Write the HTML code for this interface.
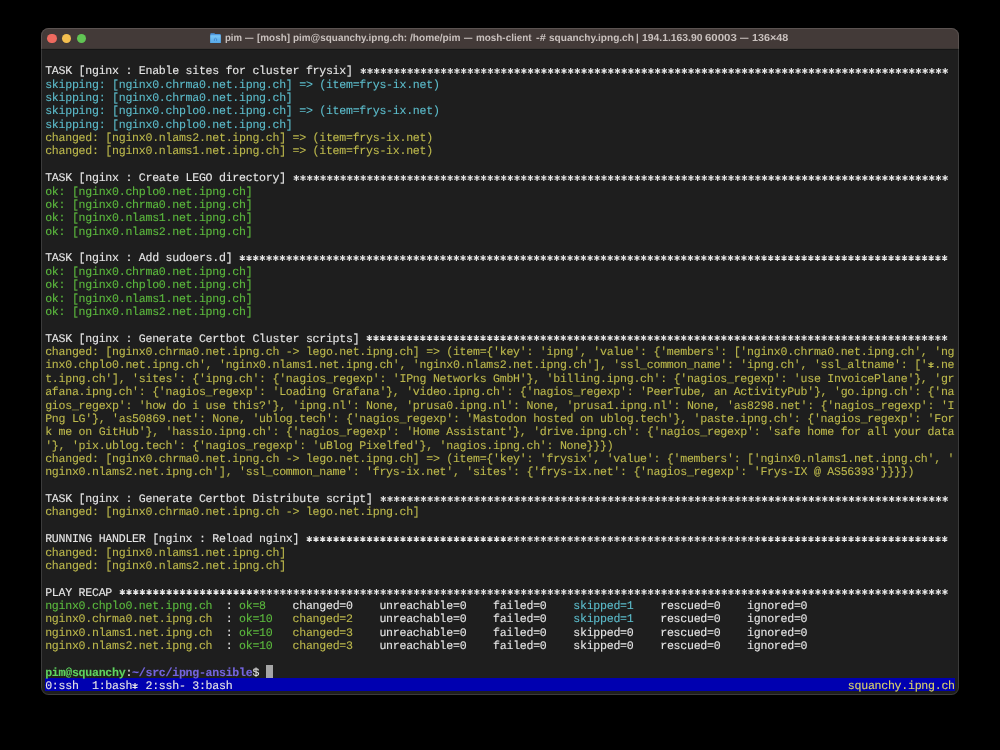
<!DOCTYPE html>
<html><head><meta charset="utf-8">
<style>
html,body{margin:0;padding:0;background:#000;width:1000px;height:750px;overflow:hidden;position:relative}
.win{position:absolute;left:41px;top:28px;width:917.8px;height:667px;border-radius:7.5px;background:#1e1e1e;overflow:hidden}
.bd{position:absolute;left:41px;top:28px;width:917.8px;height:667px;border-radius:7.5px;box-sizing:border-box;border:1px solid rgba(255,255,255,0.13)}
.tb{position:absolute;left:0;top:0;width:918px;height:20px;background:#433a38;border-bottom:1px solid #3b3633;box-shadow:0 1px 0 #161616}
.tl{position:absolute;top:6px;width:9.2px;height:9.2px;border-radius:50%}
.title span{position:absolute;top:0;transform-origin:0 0}
.title{position:absolute;left:0;top:3px;font-family:"Liberation Sans",sans-serif;font-weight:bold;font-size:10.2px;color:#c9c1be;white-space:pre;line-height:16px;will-change:transform;text-rendering:geometricPrecision}
.r,.sbt{position:absolute;left:45.2px;height:13.386px;line-height:13.386px;font-family:"Liberation Mono",monospace;font-size:11.6px;letter-spacing:-0.273px;white-space:pre;color:#e6e6e6;-webkit-text-stroke:0.1px currentColor;text-rendering:geometricPrecision}
.txt{position:absolute;left:0;top:0;width:1000px;height:750px;will-change:transform}
.st{position:absolute;overflow:visible}
.as{position:relative;top:3px}
.st path{stroke:#e6e6e6;stroke-width:1.25;stroke-linecap:butt;fill:none}
.w{color:#e6e6e6}.c{color:#5cbccb}.y{color:#bcb84c}.g{color:#5cba3e}
.pg{color:#5fd35f;font-weight:bold}.pp{color:#7465e0;font-weight:bold}
.cur{position:absolute;left:265.9px;top:664.5px;width:7.1px;height:13.37px;background:#a6a6a6}
.sb{position:absolute;left:45.2px;top:677.9px;width:909.6px;height:13.37px;background:#0000b0}
.sbt{width:909.6px}
.sbt .rt{position:absolute;right:0;top:0;color:#dcd46a}
</style></head><body>
<div class="win">
<div class="tb">
<div class="tl" style="left:6.4px;background:#ee6a5f"></div>
<div class="tl" style="left:21.1px;background:#f5bf4f"></div>
<div class="tl" style="left:35.9px;background:#61c554"></div>
<svg style="position:absolute;left:169px;top:4.8px" width="11" height="10.4" viewBox="0 0 11 10.4"><defs><linearGradient id="fg" x1="0" y1="0" x2="0" y2="1"><stop offset="0" stop-color="#7cc8f8"/><stop offset="1" stop-color="#55a8e8"/></linearGradient></defs><path d="M0.3 1.0 Q0.3 0.2 1.1 0.2 L3.9 0.2 Q4.4 0.2 4.7 0.6 L5.1 1.1 L10 1.1 Q10.7 1.1 10.7 1.8 L10.7 9.5 Q10.7 10.2 10 10.2 L1 10.2 Q0.3 10.2 0.3 9.5 Z" fill="#4d97de"/><path d="M0.3 2.3 L10.7 2.3 L10.7 9.5 Q10.7 10.2 10 10.2 L1 10.2 Q0.3 10.2 0.3 9.5 Z" fill="url(#fg)"/><path d="M4.4 8.0 L4.4 5.9 Q5.5 4.6 6.6 5.9 L6.6 8.0" stroke="#4a8ed2" stroke-width="1" fill="none"/></svg>
<div class="title"><span style="left:183.8px;transform:scaleX(0.939)">pim</span><span style="left:203.7px;transform:scaleX(0.830)">—</span><span style="left:215.7px;transform:scaleX(0.971)">[mosh]</span><span style="left:252.0px;transform:scaleX(0.973)">pim@squanchy.ipng.ch:</span><span style="left:368.8px;transform:scaleX(0.992)">/home/pim</span><span style="left:423.2px;transform:scaleX(0.820)">—</span><span style="left:435.2px;transform:scaleX(0.970)">mosh-client</span><span style="left:495.0px;transform:scaleX(1.078)">-#</span><span style="left:507.7px;transform:scaleX(0.988)">squanchy.ipng.ch</span><span style="left:595.4px;transform:scaleX(0.950)">|</span><span style="left:600.5px;transform:scaleX(1.017)">194.1.163.90</span><span style="left:664.2px;transform:scaleX(1.125)">60003</span><span style="left:699.4px;transform:scaleX(0.830)">—</span><span style="left:710.7px;transform:scaleX(1.059)">136×48</span></div>
</div>
</div>
<div class="bd"></div>
<div class="cur"></div>
<div class="sb"></div>
<div class="txt"><div class="r" style="top:65.27px"><span class="w">TASK [nginx : Enable sites for cluster frysix]</span></div>
<div class="r" style="top:78.64px"><span class="c">skipping: [nginx0.chrma0.net.ipng.ch] =&gt; (item=frys-ix.net)</span></div>
<div class="r" style="top:92.01px"><span class="c">skipping: [nginx0.chrma0.net.ipng.ch]</span></div>
<div class="r" style="top:105.38px"><span class="c">skipping: [nginx0.chplo0.net.ipng.ch] =&gt; (item=frys-ix.net)</span></div>
<div class="r" style="top:118.75px"><span class="c">skipping: [nginx0.chplo0.net.ipng.ch]</span></div>
<div class="r" style="top:132.12px"><span class="y">changed: [nginx0.nlams2.net.ipng.ch] =&gt; (item=frys-ix.net)</span></div>
<div class="r" style="top:145.49px"><span class="y">changed: [nginx0.nlams1.net.ipng.ch] =&gt; (item=frys-ix.net)</span></div>
<div class="r" style="top:172.23px"><span class="w">TASK [nginx : Create LEGO directory]</span></div>
<div class="r" style="top:185.60px"><span class="g">ok: [nginx0.chplo0.net.ipng.ch]</span></div>
<div class="r" style="top:198.97px"><span class="g">ok: [nginx0.chrma0.net.ipng.ch]</span></div>
<div class="r" style="top:212.34px"><span class="g">ok: [nginx0.nlams1.net.ipng.ch]</span></div>
<div class="r" style="top:225.71px"><span class="g">ok: [nginx0.nlams2.net.ipng.ch]</span></div>
<div class="r" style="top:252.45px"><span class="w">TASK [nginx : Add sudoers.d]</span></div>
<div class="r" style="top:265.82px"><span class="g">ok: [nginx0.chrma0.net.ipng.ch]</span></div>
<div class="r" style="top:279.19px"><span class="g">ok: [nginx0.chplo0.net.ipng.ch]</span></div>
<div class="r" style="top:292.56px"><span class="g">ok: [nginx0.nlams1.net.ipng.ch]</span></div>
<div class="r" style="top:305.93px"><span class="g">ok: [nginx0.nlams2.net.ipng.ch]</span></div>
<div class="r" style="top:332.67px"><span class="w">TASK [nginx : Generate Certbot Cluster scripts]</span></div>
<div class="r" style="top:346.04px"><span class="y">changed: [nginx0.chrma0.net.ipng.ch -&gt; lego.net.ipng.ch] =&gt; (item={'key': 'ipng', 'value': {'members': ['nginx0.chrma0.net.ipng.ch', 'ng</span></div>
<div class="r" style="top:359.41px"><span class="y">inx0.chplo0.net.ipng.ch', 'nginx0.nlams1.net.ipng.ch', 'nginx0.nlams2.net.ipng.ch'], 'ssl_common_name': 'ipng.ch', 'ssl_altname': [' .ne</span></div>
<div class="r" style="top:372.78px"><span class="y">t.ipng.ch'], 'sites': {'ipng.ch': {'nagios_regexp': 'IPng Networks GmbH'}, 'billing.ipng.ch': {'nagios_regexp': 'use InvoicePlane'}, 'gr</span></div>
<div class="r" style="top:386.15px"><span class="y">afana.ipng.ch': {'nagios_regexp': 'Loading Grafana'}, 'video.ipng.ch': {'nagios_regexp': 'PeerTube, an ActivityPub'}, 'go.ipng.ch': {'na</span></div>
<div class="r" style="top:399.52px"><span class="y">gios_regexp': 'how do i use this?'}, 'ipng.nl': None, 'prusa0.ipng.nl': None, 'prusa1.ipng.nl': None, 'as8298.net': {'nagios_regexp': 'I</span></div>
<div class="r" style="top:412.89px"><span class="y">Png LG'}, 'as50869.net': None, 'ublog.tech': {'nagios_regexp': 'Mastodon hosted on ublog.tech'}, 'paste.ipng.ch': {'nagios_regexp': 'For</span></div>
<div class="r" style="top:426.26px"><span class="y">k me on GitHub'}, 'hassio.ipng.ch': {'nagios_regexp': 'Home Assistant'}, 'drive.ipng.ch': {'nagios_regexp': 'safe home for all your data</span></div>
<div class="r" style="top:439.63px"><span class="y">'}, 'pix.ublog.tech': {'nagios_regexp': 'uBlog Pixelfed'}, 'nagios.ipng.ch': None}}})</span></div>
<div class="r" style="top:453.00px"><span class="y">changed: [nginx0.chrma0.net.ipng.ch -&gt; lego.net.ipng.ch] =&gt; (item={'key': 'frysix', 'value': {'members': ['nginx0.nlams1.net.ipng.ch', '</span></div>
<div class="r" style="top:466.37px"><span class="y">nginx0.nlams2.net.ipng.ch'], 'ssl_common_name': 'frys-ix.net', 'sites': {'frys-ix.net': {'nagios_regexp': 'Frys-IX @ AS56393'}}}})</span></div>
<div class="r" style="top:493.11px"><span class="w">TASK [nginx : Generate Certbot Distribute script]</span></div>
<div class="r" style="top:506.48px"><span class="y">changed: [nginx0.chrma0.net.ipng.ch -&gt; lego.net.ipng.ch]</span></div>
<div class="r" style="top:533.22px"><span class="w">RUNNING HANDLER [nginx : Reload nginx]</span></div>
<div class="r" style="top:546.59px"><span class="y">changed: [nginx0.nlams1.net.ipng.ch]</span></div>
<div class="r" style="top:559.96px"><span class="y">changed: [nginx0.nlams2.net.ipng.ch]</span></div>
<div class="r" style="top:586.70px"><span class="w">PLAY RECAP</span></div>
<div class="r" style="top:600.07px"><span class="g">nginx0.chplo0.net.ipng.ch </span><span class="w"> : </span><span class="g">ok=8   </span><span class="w"> </span><span class="w">changed=0   </span><span class="w"> </span><span class="w">unreachable=0   </span><span class="w"> </span><span class="w">failed=0   </span><span class="w"> </span><span class="c">skipped=1   </span><span class="w"> </span><span class="w">rescued=0   </span><span class="w"> </span><span class="w">ignored=0   </span></div>
<div class="r" style="top:613.44px"><span class="y">nginx0.chrma0.net.ipng.ch </span><span class="w"> : </span><span class="g">ok=10  </span><span class="w"> </span><span class="y">changed=2   </span><span class="w"> </span><span class="w">unreachable=0   </span><span class="w"> </span><span class="w">failed=0   </span><span class="w"> </span><span class="c">skipped=1   </span><span class="w"> </span><span class="w">rescued=0   </span><span class="w"> </span><span class="w">ignored=0   </span></div>
<div class="r" style="top:626.81px"><span class="y">nginx0.nlams1.net.ipng.ch </span><span class="w"> : </span><span class="g">ok=10  </span><span class="w"> </span><span class="y">changed=3   </span><span class="w"> </span><span class="w">unreachable=0   </span><span class="w"> </span><span class="w">failed=0   </span><span class="w"> </span><span class="w">skipped=0   </span><span class="w"> </span><span class="w">rescued=0   </span><span class="w"> </span><span class="w">ignored=0   </span></div>
<div class="r" style="top:640.18px"><span class="y">nginx0.nlams2.net.ipng.ch </span><span class="w"> : </span><span class="g">ok=10  </span><span class="w"> </span><span class="y">changed=3   </span><span class="w"> </span><span class="w">unreachable=0   </span><span class="w"> </span><span class="w">failed=0   </span><span class="w"> </span><span class="w">skipped=0   </span><span class="w"> </span><span class="w">rescued=0   </span><span class="w"> </span><span class="w">ignored=0   </span></div>
<div class="r" style="top:666.92px"><span class="pg">pim@squanchy</span><span class="w">:</span><span class="pp">~/src/ipng-ansible</span><span class="w">$ </span></div>
<svg class="st" style="left:359.54px;top:65.67px" width="588.54" height="10"><path d="M3.34 2.00v6.00M0.75 3.50l5.20 3.00m0 -3.00l-5.20 3.00M10.03 2.00v6.00M7.43 3.50l5.20 3.00m0 -3.00l-5.20 3.00M16.72 2.00v6.00M14.12 3.50l5.20 3.00m0 -3.00l-5.20 3.00M23.41 2.00v6.00M20.81 3.50l5.20 3.00m0 -3.00l-5.20 3.00M30.10 2.00v6.00M27.50 3.50l5.20 3.00m0 -3.00l-5.20 3.00M36.78 2.00v6.00M34.19 3.50l5.20 3.00m0 -3.00l-5.20 3.00M43.47 2.00v6.00M40.87 3.50l5.20 3.00m0 -3.00l-5.20 3.00M50.16 2.00v6.00M47.56 3.50l5.20 3.00m0 -3.00l-5.20 3.00M56.85 2.00v6.00M54.25 3.50l5.20 3.00m0 -3.00l-5.20 3.00M63.54 2.00v6.00M60.94 3.50l5.20 3.00m0 -3.00l-5.20 3.00M70.22 2.00v6.00M67.63 3.50l5.20 3.00m0 -3.00l-5.20 3.00M76.91 2.00v6.00M74.31 3.50l5.20 3.00m0 -3.00l-5.20 3.00M83.60 2.00v6.00M81.00 3.50l5.20 3.00m0 -3.00l-5.20 3.00M90.29 2.00v6.00M87.69 3.50l5.20 3.00m0 -3.00l-5.20 3.00M96.98 2.00v6.00M94.38 3.50l5.20 3.00m0 -3.00l-5.20 3.00M103.66 2.00v6.00M101.07 3.50l5.20 3.00m0 -3.00l-5.20 3.00M110.35 2.00v6.00M107.75 3.50l5.20 3.00m0 -3.00l-5.20 3.00M117.04 2.00v6.00M114.44 3.50l5.20 3.00m0 -3.00l-5.20 3.00M123.73 2.00v6.00M121.13 3.50l5.20 3.00m0 -3.00l-5.20 3.00M130.42 2.00v6.00M127.82 3.50l5.20 3.00m0 -3.00l-5.20 3.00M137.10 2.00v6.00M134.51 3.50l5.20 3.00m0 -3.00l-5.20 3.00M143.79 2.00v6.00M141.19 3.50l5.20 3.00m0 -3.00l-5.20 3.00M150.48 2.00v6.00M147.88 3.50l5.20 3.00m0 -3.00l-5.20 3.00M157.17 2.00v6.00M154.57 3.50l5.20 3.00m0 -3.00l-5.20 3.00M163.86 2.00v6.00M161.26 3.50l5.20 3.00m0 -3.00l-5.20 3.00M170.54 2.00v6.00M167.95 3.50l5.20 3.00m0 -3.00l-5.20 3.00M177.23 2.00v6.00M174.63 3.50l5.20 3.00m0 -3.00l-5.20 3.00M183.92 2.00v6.00M181.32 3.50l5.20 3.00m0 -3.00l-5.20 3.00M190.61 2.00v6.00M188.01 3.50l5.20 3.00m0 -3.00l-5.20 3.00M197.30 2.00v6.00M194.70 3.50l5.20 3.00m0 -3.00l-5.20 3.00M203.98 2.00v6.00M201.39 3.50l5.20 3.00m0 -3.00l-5.20 3.00M210.67 2.00v6.00M208.07 3.50l5.20 3.00m0 -3.00l-5.20 3.00M217.36 2.00v6.00M214.76 3.50l5.20 3.00m0 -3.00l-5.20 3.00M224.05 2.00v6.00M221.45 3.50l5.20 3.00m0 -3.00l-5.20 3.00M230.74 2.00v6.00M228.14 3.50l5.20 3.00m0 -3.00l-5.20 3.00M237.42 2.00v6.00M234.83 3.50l5.20 3.00m0 -3.00l-5.20 3.00M244.11 2.00v6.00M241.51 3.50l5.20 3.00m0 -3.00l-5.20 3.00M250.80 2.00v6.00M248.20 3.50l5.20 3.00m0 -3.00l-5.20 3.00M257.49 2.00v6.00M254.89 3.50l5.20 3.00m0 -3.00l-5.20 3.00M264.18 2.00v6.00M261.58 3.50l5.20 3.00m0 -3.00l-5.20 3.00M270.86 2.00v6.00M268.27 3.50l5.20 3.00m0 -3.00l-5.20 3.00M277.55 2.00v6.00M274.95 3.50l5.20 3.00m0 -3.00l-5.20 3.00M284.24 2.00v6.00M281.64 3.50l5.20 3.00m0 -3.00l-5.20 3.00M290.93 2.00v6.00M288.33 3.50l5.20 3.00m0 -3.00l-5.20 3.00M297.62 2.00v6.00M295.02 3.50l5.20 3.00m0 -3.00l-5.20 3.00M304.30 2.00v6.00M301.71 3.50l5.20 3.00m0 -3.00l-5.20 3.00M310.99 2.00v6.00M308.39 3.50l5.20 3.00m0 -3.00l-5.20 3.00M317.68 2.00v6.00M315.08 3.50l5.20 3.00m0 -3.00l-5.20 3.00M324.37 2.00v6.00M321.77 3.50l5.20 3.00m0 -3.00l-5.20 3.00M331.06 2.00v6.00M328.46 3.50l5.20 3.00m0 -3.00l-5.20 3.00M337.74 2.00v6.00M335.15 3.50l5.20 3.00m0 -3.00l-5.20 3.00M344.43 2.00v6.00M341.83 3.50l5.20 3.00m0 -3.00l-5.20 3.00M351.12 2.00v6.00M348.52 3.50l5.20 3.00m0 -3.00l-5.20 3.00M357.81 2.00v6.00M355.21 3.50l5.20 3.00m0 -3.00l-5.20 3.00M364.50 2.00v6.00M361.90 3.50l5.20 3.00m0 -3.00l-5.20 3.00M371.18 2.00v6.00M368.59 3.50l5.20 3.00m0 -3.00l-5.20 3.00M377.87 2.00v6.00M375.27 3.50l5.20 3.00m0 -3.00l-5.20 3.00M384.56 2.00v6.00M381.96 3.50l5.20 3.00m0 -3.00l-5.20 3.00M391.25 2.00v6.00M388.65 3.50l5.20 3.00m0 -3.00l-5.20 3.00M397.94 2.00v6.00M395.34 3.50l5.20 3.00m0 -3.00l-5.20 3.00M404.62 2.00v6.00M402.03 3.50l5.20 3.00m0 -3.00l-5.20 3.00M411.31 2.00v6.00M408.71 3.50l5.20 3.00m0 -3.00l-5.20 3.00M418.00 2.00v6.00M415.40 3.50l5.20 3.00m0 -3.00l-5.20 3.00M424.69 2.00v6.00M422.09 3.50l5.20 3.00m0 -3.00l-5.20 3.00M431.38 2.00v6.00M428.78 3.50l5.20 3.00m0 -3.00l-5.20 3.00M438.06 2.00v6.00M435.47 3.50l5.20 3.00m0 -3.00l-5.20 3.00M444.75 2.00v6.00M442.15 3.50l5.20 3.00m0 -3.00l-5.20 3.00M451.44 2.00v6.00M448.84 3.50l5.20 3.00m0 -3.00l-5.20 3.00M458.13 2.00v6.00M455.53 3.50l5.20 3.00m0 -3.00l-5.20 3.00M464.82 2.00v6.00M462.22 3.50l5.20 3.00m0 -3.00l-5.20 3.00M471.50 2.00v6.00M468.91 3.50l5.20 3.00m0 -3.00l-5.20 3.00M478.19 2.00v6.00M475.59 3.50l5.20 3.00m0 -3.00l-5.20 3.00M484.88 2.00v6.00M482.28 3.50l5.20 3.00m0 -3.00l-5.20 3.00M491.57 2.00v6.00M488.97 3.50l5.20 3.00m0 -3.00l-5.20 3.00M498.26 2.00v6.00M495.66 3.50l5.20 3.00m0 -3.00l-5.20 3.00M504.94 2.00v6.00M502.35 3.50l5.20 3.00m0 -3.00l-5.20 3.00M511.63 2.00v6.00M509.03 3.50l5.20 3.00m0 -3.00l-5.20 3.00M518.32 2.00v6.00M515.72 3.50l5.20 3.00m0 -3.00l-5.20 3.00M525.01 2.00v6.00M522.41 3.50l5.20 3.00m0 -3.00l-5.20 3.00M531.70 2.00v6.00M529.10 3.50l5.20 3.00m0 -3.00l-5.20 3.00M538.38 2.00v6.00M535.79 3.50l5.20 3.00m0 -3.00l-5.20 3.00M545.07 2.00v6.00M542.47 3.50l5.20 3.00m0 -3.00l-5.20 3.00M551.76 2.00v6.00M549.16 3.50l5.20 3.00m0 -3.00l-5.20 3.00M558.45 2.00v6.00M555.85 3.50l5.20 3.00m0 -3.00l-5.20 3.00M565.14 2.00v6.00M562.54 3.50l5.20 3.00m0 -3.00l-5.20 3.00M571.82 2.00v6.00M569.23 3.50l5.20 3.00m0 -3.00l-5.20 3.00M578.51 2.00v6.00M575.91 3.50l5.20 3.00m0 -3.00l-5.20 3.00M585.20 2.00v6.00M582.60 3.50l5.20 3.00m0 -3.00l-5.20 3.00"/></svg>
<svg class="st" style="left:292.66px;top:172.63px" width="655.42" height="10"><path d="M3.34 2.00v6.00M0.75 3.50l5.20 3.00m0 -3.00l-5.20 3.00M10.03 2.00v6.00M7.43 3.50l5.20 3.00m0 -3.00l-5.20 3.00M16.72 2.00v6.00M14.12 3.50l5.20 3.00m0 -3.00l-5.20 3.00M23.41 2.00v6.00M20.81 3.50l5.20 3.00m0 -3.00l-5.20 3.00M30.10 2.00v6.00M27.50 3.50l5.20 3.00m0 -3.00l-5.20 3.00M36.78 2.00v6.00M34.19 3.50l5.20 3.00m0 -3.00l-5.20 3.00M43.47 2.00v6.00M40.87 3.50l5.20 3.00m0 -3.00l-5.20 3.00M50.16 2.00v6.00M47.56 3.50l5.20 3.00m0 -3.00l-5.20 3.00M56.85 2.00v6.00M54.25 3.50l5.20 3.00m0 -3.00l-5.20 3.00M63.54 2.00v6.00M60.94 3.50l5.20 3.00m0 -3.00l-5.20 3.00M70.22 2.00v6.00M67.63 3.50l5.20 3.00m0 -3.00l-5.20 3.00M76.91 2.00v6.00M74.31 3.50l5.20 3.00m0 -3.00l-5.20 3.00M83.60 2.00v6.00M81.00 3.50l5.20 3.00m0 -3.00l-5.20 3.00M90.29 2.00v6.00M87.69 3.50l5.20 3.00m0 -3.00l-5.20 3.00M96.98 2.00v6.00M94.38 3.50l5.20 3.00m0 -3.00l-5.20 3.00M103.66 2.00v6.00M101.07 3.50l5.20 3.00m0 -3.00l-5.20 3.00M110.35 2.00v6.00M107.75 3.50l5.20 3.00m0 -3.00l-5.20 3.00M117.04 2.00v6.00M114.44 3.50l5.20 3.00m0 -3.00l-5.20 3.00M123.73 2.00v6.00M121.13 3.50l5.20 3.00m0 -3.00l-5.20 3.00M130.42 2.00v6.00M127.82 3.50l5.20 3.00m0 -3.00l-5.20 3.00M137.10 2.00v6.00M134.51 3.50l5.20 3.00m0 -3.00l-5.20 3.00M143.79 2.00v6.00M141.19 3.50l5.20 3.00m0 -3.00l-5.20 3.00M150.48 2.00v6.00M147.88 3.50l5.20 3.00m0 -3.00l-5.20 3.00M157.17 2.00v6.00M154.57 3.50l5.20 3.00m0 -3.00l-5.20 3.00M163.86 2.00v6.00M161.26 3.50l5.20 3.00m0 -3.00l-5.20 3.00M170.54 2.00v6.00M167.95 3.50l5.20 3.00m0 -3.00l-5.20 3.00M177.23 2.00v6.00M174.63 3.50l5.20 3.00m0 -3.00l-5.20 3.00M183.92 2.00v6.00M181.32 3.50l5.20 3.00m0 -3.00l-5.20 3.00M190.61 2.00v6.00M188.01 3.50l5.20 3.00m0 -3.00l-5.20 3.00M197.30 2.00v6.00M194.70 3.50l5.20 3.00m0 -3.00l-5.20 3.00M203.98 2.00v6.00M201.39 3.50l5.20 3.00m0 -3.00l-5.20 3.00M210.67 2.00v6.00M208.07 3.50l5.20 3.00m0 -3.00l-5.20 3.00M217.36 2.00v6.00M214.76 3.50l5.20 3.00m0 -3.00l-5.20 3.00M224.05 2.00v6.00M221.45 3.50l5.20 3.00m0 -3.00l-5.20 3.00M230.74 2.00v6.00M228.14 3.50l5.20 3.00m0 -3.00l-5.20 3.00M237.42 2.00v6.00M234.83 3.50l5.20 3.00m0 -3.00l-5.20 3.00M244.11 2.00v6.00M241.51 3.50l5.20 3.00m0 -3.00l-5.20 3.00M250.80 2.00v6.00M248.20 3.50l5.20 3.00m0 -3.00l-5.20 3.00M257.49 2.00v6.00M254.89 3.50l5.20 3.00m0 -3.00l-5.20 3.00M264.18 2.00v6.00M261.58 3.50l5.20 3.00m0 -3.00l-5.20 3.00M270.86 2.00v6.00M268.27 3.50l5.20 3.00m0 -3.00l-5.20 3.00M277.55 2.00v6.00M274.95 3.50l5.20 3.00m0 -3.00l-5.20 3.00M284.24 2.00v6.00M281.64 3.50l5.20 3.00m0 -3.00l-5.20 3.00M290.93 2.00v6.00M288.33 3.50l5.20 3.00m0 -3.00l-5.20 3.00M297.62 2.00v6.00M295.02 3.50l5.20 3.00m0 -3.00l-5.20 3.00M304.30 2.00v6.00M301.71 3.50l5.20 3.00m0 -3.00l-5.20 3.00M310.99 2.00v6.00M308.39 3.50l5.20 3.00m0 -3.00l-5.20 3.00M317.68 2.00v6.00M315.08 3.50l5.20 3.00m0 -3.00l-5.20 3.00M324.37 2.00v6.00M321.77 3.50l5.20 3.00m0 -3.00l-5.20 3.00M331.06 2.00v6.00M328.46 3.50l5.20 3.00m0 -3.00l-5.20 3.00M337.74 2.00v6.00M335.15 3.50l5.20 3.00m0 -3.00l-5.20 3.00M344.43 2.00v6.00M341.83 3.50l5.20 3.00m0 -3.00l-5.20 3.00M351.12 2.00v6.00M348.52 3.50l5.20 3.00m0 -3.00l-5.20 3.00M357.81 2.00v6.00M355.21 3.50l5.20 3.00m0 -3.00l-5.20 3.00M364.50 2.00v6.00M361.90 3.50l5.20 3.00m0 -3.00l-5.20 3.00M371.18 2.00v6.00M368.59 3.50l5.20 3.00m0 -3.00l-5.20 3.00M377.87 2.00v6.00M375.27 3.50l5.20 3.00m0 -3.00l-5.20 3.00M384.56 2.00v6.00M381.96 3.50l5.20 3.00m0 -3.00l-5.20 3.00M391.25 2.00v6.00M388.65 3.50l5.20 3.00m0 -3.00l-5.20 3.00M397.94 2.00v6.00M395.34 3.50l5.20 3.00m0 -3.00l-5.20 3.00M404.62 2.00v6.00M402.03 3.50l5.20 3.00m0 -3.00l-5.20 3.00M411.31 2.00v6.00M408.71 3.50l5.20 3.00m0 -3.00l-5.20 3.00M418.00 2.00v6.00M415.40 3.50l5.20 3.00m0 -3.00l-5.20 3.00M424.69 2.00v6.00M422.09 3.50l5.20 3.00m0 -3.00l-5.20 3.00M431.38 2.00v6.00M428.78 3.50l5.20 3.00m0 -3.00l-5.20 3.00M438.06 2.00v6.00M435.47 3.50l5.20 3.00m0 -3.00l-5.20 3.00M444.75 2.00v6.00M442.15 3.50l5.20 3.00m0 -3.00l-5.20 3.00M451.44 2.00v6.00M448.84 3.50l5.20 3.00m0 -3.00l-5.20 3.00M458.13 2.00v6.00M455.53 3.50l5.20 3.00m0 -3.00l-5.20 3.00M464.82 2.00v6.00M462.22 3.50l5.20 3.00m0 -3.00l-5.20 3.00M471.50 2.00v6.00M468.91 3.50l5.20 3.00m0 -3.00l-5.20 3.00M478.19 2.00v6.00M475.59 3.50l5.20 3.00m0 -3.00l-5.20 3.00M484.88 2.00v6.00M482.28 3.50l5.20 3.00m0 -3.00l-5.20 3.00M491.57 2.00v6.00M488.97 3.50l5.20 3.00m0 -3.00l-5.20 3.00M498.26 2.00v6.00M495.66 3.50l5.20 3.00m0 -3.00l-5.20 3.00M504.94 2.00v6.00M502.35 3.50l5.20 3.00m0 -3.00l-5.20 3.00M511.63 2.00v6.00M509.03 3.50l5.20 3.00m0 -3.00l-5.20 3.00M518.32 2.00v6.00M515.72 3.50l5.20 3.00m0 -3.00l-5.20 3.00M525.01 2.00v6.00M522.41 3.50l5.20 3.00m0 -3.00l-5.20 3.00M531.70 2.00v6.00M529.10 3.50l5.20 3.00m0 -3.00l-5.20 3.00M538.38 2.00v6.00M535.79 3.50l5.20 3.00m0 -3.00l-5.20 3.00M545.07 2.00v6.00M542.47 3.50l5.20 3.00m0 -3.00l-5.20 3.00M551.76 2.00v6.00M549.16 3.50l5.20 3.00m0 -3.00l-5.20 3.00M558.45 2.00v6.00M555.85 3.50l5.20 3.00m0 -3.00l-5.20 3.00M565.14 2.00v6.00M562.54 3.50l5.20 3.00m0 -3.00l-5.20 3.00M571.82 2.00v6.00M569.23 3.50l5.20 3.00m0 -3.00l-5.20 3.00M578.51 2.00v6.00M575.91 3.50l5.20 3.00m0 -3.00l-5.20 3.00M585.20 2.00v6.00M582.60 3.50l5.20 3.00m0 -3.00l-5.20 3.00M591.89 2.00v6.00M589.29 3.50l5.20 3.00m0 -3.00l-5.20 3.00M598.58 2.00v6.00M595.98 3.50l5.20 3.00m0 -3.00l-5.20 3.00M605.26 2.00v6.00M602.67 3.50l5.20 3.00m0 -3.00l-5.20 3.00M611.95 2.00v6.00M609.35 3.50l5.20 3.00m0 -3.00l-5.20 3.00M618.64 2.00v6.00M616.04 3.50l5.20 3.00m0 -3.00l-5.20 3.00M625.33 2.00v6.00M622.73 3.50l5.20 3.00m0 -3.00l-5.20 3.00M632.02 2.00v6.00M629.42 3.50l5.20 3.00m0 -3.00l-5.20 3.00M638.70 2.00v6.00M636.11 3.50l5.20 3.00m0 -3.00l-5.20 3.00M645.39 2.00v6.00M642.79 3.50l5.20 3.00m0 -3.00l-5.20 3.00M652.08 2.00v6.00M649.48 3.50l5.20 3.00m0 -3.00l-5.20 3.00"/></svg>
<svg class="st" style="left:239.15px;top:252.85px" width="708.93" height="10"><path d="M3.34 2.00v6.00M0.75 3.50l5.20 3.00m0 -3.00l-5.20 3.00M10.03 2.00v6.00M7.43 3.50l5.20 3.00m0 -3.00l-5.20 3.00M16.72 2.00v6.00M14.12 3.50l5.20 3.00m0 -3.00l-5.20 3.00M23.41 2.00v6.00M20.81 3.50l5.20 3.00m0 -3.00l-5.20 3.00M30.10 2.00v6.00M27.50 3.50l5.20 3.00m0 -3.00l-5.20 3.00M36.78 2.00v6.00M34.19 3.50l5.20 3.00m0 -3.00l-5.20 3.00M43.47 2.00v6.00M40.87 3.50l5.20 3.00m0 -3.00l-5.20 3.00M50.16 2.00v6.00M47.56 3.50l5.20 3.00m0 -3.00l-5.20 3.00M56.85 2.00v6.00M54.25 3.50l5.20 3.00m0 -3.00l-5.20 3.00M63.54 2.00v6.00M60.94 3.50l5.20 3.00m0 -3.00l-5.20 3.00M70.22 2.00v6.00M67.63 3.50l5.20 3.00m0 -3.00l-5.20 3.00M76.91 2.00v6.00M74.31 3.50l5.20 3.00m0 -3.00l-5.20 3.00M83.60 2.00v6.00M81.00 3.50l5.20 3.00m0 -3.00l-5.20 3.00M90.29 2.00v6.00M87.69 3.50l5.20 3.00m0 -3.00l-5.20 3.00M96.98 2.00v6.00M94.38 3.50l5.20 3.00m0 -3.00l-5.20 3.00M103.66 2.00v6.00M101.07 3.50l5.20 3.00m0 -3.00l-5.20 3.00M110.35 2.00v6.00M107.75 3.50l5.20 3.00m0 -3.00l-5.20 3.00M117.04 2.00v6.00M114.44 3.50l5.20 3.00m0 -3.00l-5.20 3.00M123.73 2.00v6.00M121.13 3.50l5.20 3.00m0 -3.00l-5.20 3.00M130.42 2.00v6.00M127.82 3.50l5.20 3.00m0 -3.00l-5.20 3.00M137.10 2.00v6.00M134.51 3.50l5.20 3.00m0 -3.00l-5.20 3.00M143.79 2.00v6.00M141.19 3.50l5.20 3.00m0 -3.00l-5.20 3.00M150.48 2.00v6.00M147.88 3.50l5.20 3.00m0 -3.00l-5.20 3.00M157.17 2.00v6.00M154.57 3.50l5.20 3.00m0 -3.00l-5.20 3.00M163.86 2.00v6.00M161.26 3.50l5.20 3.00m0 -3.00l-5.20 3.00M170.54 2.00v6.00M167.95 3.50l5.20 3.00m0 -3.00l-5.20 3.00M177.23 2.00v6.00M174.63 3.50l5.20 3.00m0 -3.00l-5.20 3.00M183.92 2.00v6.00M181.32 3.50l5.20 3.00m0 -3.00l-5.20 3.00M190.61 2.00v6.00M188.01 3.50l5.20 3.00m0 -3.00l-5.20 3.00M197.30 2.00v6.00M194.70 3.50l5.20 3.00m0 -3.00l-5.20 3.00M203.98 2.00v6.00M201.39 3.50l5.20 3.00m0 -3.00l-5.20 3.00M210.67 2.00v6.00M208.07 3.50l5.20 3.00m0 -3.00l-5.20 3.00M217.36 2.00v6.00M214.76 3.50l5.20 3.00m0 -3.00l-5.20 3.00M224.05 2.00v6.00M221.45 3.50l5.20 3.00m0 -3.00l-5.20 3.00M230.74 2.00v6.00M228.14 3.50l5.20 3.00m0 -3.00l-5.20 3.00M237.42 2.00v6.00M234.83 3.50l5.20 3.00m0 -3.00l-5.20 3.00M244.11 2.00v6.00M241.51 3.50l5.20 3.00m0 -3.00l-5.20 3.00M250.80 2.00v6.00M248.20 3.50l5.20 3.00m0 -3.00l-5.20 3.00M257.49 2.00v6.00M254.89 3.50l5.20 3.00m0 -3.00l-5.20 3.00M264.18 2.00v6.00M261.58 3.50l5.20 3.00m0 -3.00l-5.20 3.00M270.86 2.00v6.00M268.27 3.50l5.20 3.00m0 -3.00l-5.20 3.00M277.55 2.00v6.00M274.95 3.50l5.20 3.00m0 -3.00l-5.20 3.00M284.24 2.00v6.00M281.64 3.50l5.20 3.00m0 -3.00l-5.20 3.00M290.93 2.00v6.00M288.33 3.50l5.20 3.00m0 -3.00l-5.20 3.00M297.62 2.00v6.00M295.02 3.50l5.20 3.00m0 -3.00l-5.20 3.00M304.30 2.00v6.00M301.71 3.50l5.20 3.00m0 -3.00l-5.20 3.00M310.99 2.00v6.00M308.39 3.50l5.20 3.00m0 -3.00l-5.20 3.00M317.68 2.00v6.00M315.08 3.50l5.20 3.00m0 -3.00l-5.20 3.00M324.37 2.00v6.00M321.77 3.50l5.20 3.00m0 -3.00l-5.20 3.00M331.06 2.00v6.00M328.46 3.50l5.20 3.00m0 -3.00l-5.20 3.00M337.74 2.00v6.00M335.15 3.50l5.20 3.00m0 -3.00l-5.20 3.00M344.43 2.00v6.00M341.83 3.50l5.20 3.00m0 -3.00l-5.20 3.00M351.12 2.00v6.00M348.52 3.50l5.20 3.00m0 -3.00l-5.20 3.00M357.81 2.00v6.00M355.21 3.50l5.20 3.00m0 -3.00l-5.20 3.00M364.50 2.00v6.00M361.90 3.50l5.20 3.00m0 -3.00l-5.20 3.00M371.18 2.00v6.00M368.59 3.50l5.20 3.00m0 -3.00l-5.20 3.00M377.87 2.00v6.00M375.27 3.50l5.20 3.00m0 -3.00l-5.20 3.00M384.56 2.00v6.00M381.96 3.50l5.20 3.00m0 -3.00l-5.20 3.00M391.25 2.00v6.00M388.65 3.50l5.20 3.00m0 -3.00l-5.20 3.00M397.94 2.00v6.00M395.34 3.50l5.20 3.00m0 -3.00l-5.20 3.00M404.62 2.00v6.00M402.03 3.50l5.20 3.00m0 -3.00l-5.20 3.00M411.31 2.00v6.00M408.71 3.50l5.20 3.00m0 -3.00l-5.20 3.00M418.00 2.00v6.00M415.40 3.50l5.20 3.00m0 -3.00l-5.20 3.00M424.69 2.00v6.00M422.09 3.50l5.20 3.00m0 -3.00l-5.20 3.00M431.38 2.00v6.00M428.78 3.50l5.20 3.00m0 -3.00l-5.20 3.00M438.06 2.00v6.00M435.47 3.50l5.20 3.00m0 -3.00l-5.20 3.00M444.75 2.00v6.00M442.15 3.50l5.20 3.00m0 -3.00l-5.20 3.00M451.44 2.00v6.00M448.84 3.50l5.20 3.00m0 -3.00l-5.20 3.00M458.13 2.00v6.00M455.53 3.50l5.20 3.00m0 -3.00l-5.20 3.00M464.82 2.00v6.00M462.22 3.50l5.20 3.00m0 -3.00l-5.20 3.00M471.50 2.00v6.00M468.91 3.50l5.20 3.00m0 -3.00l-5.20 3.00M478.19 2.00v6.00M475.59 3.50l5.20 3.00m0 -3.00l-5.20 3.00M484.88 2.00v6.00M482.28 3.50l5.20 3.00m0 -3.00l-5.20 3.00M491.57 2.00v6.00M488.97 3.50l5.20 3.00m0 -3.00l-5.20 3.00M498.26 2.00v6.00M495.66 3.50l5.20 3.00m0 -3.00l-5.20 3.00M504.94 2.00v6.00M502.35 3.50l5.20 3.00m0 -3.00l-5.20 3.00M511.63 2.00v6.00M509.03 3.50l5.20 3.00m0 -3.00l-5.20 3.00M518.32 2.00v6.00M515.72 3.50l5.20 3.00m0 -3.00l-5.20 3.00M525.01 2.00v6.00M522.41 3.50l5.20 3.00m0 -3.00l-5.20 3.00M531.70 2.00v6.00M529.10 3.50l5.20 3.00m0 -3.00l-5.20 3.00M538.38 2.00v6.00M535.79 3.50l5.20 3.00m0 -3.00l-5.20 3.00M545.07 2.00v6.00M542.47 3.50l5.20 3.00m0 -3.00l-5.20 3.00M551.76 2.00v6.00M549.16 3.50l5.20 3.00m0 -3.00l-5.20 3.00M558.45 2.00v6.00M555.85 3.50l5.20 3.00m0 -3.00l-5.20 3.00M565.14 2.00v6.00M562.54 3.50l5.20 3.00m0 -3.00l-5.20 3.00M571.82 2.00v6.00M569.23 3.50l5.20 3.00m0 -3.00l-5.20 3.00M578.51 2.00v6.00M575.91 3.50l5.20 3.00m0 -3.00l-5.20 3.00M585.20 2.00v6.00M582.60 3.50l5.20 3.00m0 -3.00l-5.20 3.00M591.89 2.00v6.00M589.29 3.50l5.20 3.00m0 -3.00l-5.20 3.00M598.58 2.00v6.00M595.98 3.50l5.20 3.00m0 -3.00l-5.20 3.00M605.26 2.00v6.00M602.67 3.50l5.20 3.00m0 -3.00l-5.20 3.00M611.95 2.00v6.00M609.35 3.50l5.20 3.00m0 -3.00l-5.20 3.00M618.64 2.00v6.00M616.04 3.50l5.20 3.00m0 -3.00l-5.20 3.00M625.33 2.00v6.00M622.73 3.50l5.20 3.00m0 -3.00l-5.20 3.00M632.02 2.00v6.00M629.42 3.50l5.20 3.00m0 -3.00l-5.20 3.00M638.70 2.00v6.00M636.11 3.50l5.20 3.00m0 -3.00l-5.20 3.00M645.39 2.00v6.00M642.79 3.50l5.20 3.00m0 -3.00l-5.20 3.00M652.08 2.00v6.00M649.48 3.50l5.20 3.00m0 -3.00l-5.20 3.00M658.77 2.00v6.00M656.17 3.50l5.20 3.00m0 -3.00l-5.20 3.00M665.46 2.00v6.00M662.86 3.50l5.20 3.00m0 -3.00l-5.20 3.00M672.14 2.00v6.00M669.55 3.50l5.20 3.00m0 -3.00l-5.20 3.00M678.83 2.00v6.00M676.23 3.50l5.20 3.00m0 -3.00l-5.20 3.00M685.52 2.00v6.00M682.92 3.50l5.20 3.00m0 -3.00l-5.20 3.00M692.21 2.00v6.00M689.61 3.50l5.20 3.00m0 -3.00l-5.20 3.00M698.90 2.00v6.00M696.30 3.50l5.20 3.00m0 -3.00l-5.20 3.00M705.58 2.00v6.00M702.99 3.50l5.20 3.00m0 -3.00l-5.20 3.00"/></svg>
<svg class="st" style="left:366.22px;top:333.07px" width="581.86" height="10"><path d="M3.34 2.00v6.00M0.75 3.50l5.20 3.00m0 -3.00l-5.20 3.00M10.03 2.00v6.00M7.43 3.50l5.20 3.00m0 -3.00l-5.20 3.00M16.72 2.00v6.00M14.12 3.50l5.20 3.00m0 -3.00l-5.20 3.00M23.41 2.00v6.00M20.81 3.50l5.20 3.00m0 -3.00l-5.20 3.00M30.10 2.00v6.00M27.50 3.50l5.20 3.00m0 -3.00l-5.20 3.00M36.78 2.00v6.00M34.19 3.50l5.20 3.00m0 -3.00l-5.20 3.00M43.47 2.00v6.00M40.87 3.50l5.20 3.00m0 -3.00l-5.20 3.00M50.16 2.00v6.00M47.56 3.50l5.20 3.00m0 -3.00l-5.20 3.00M56.85 2.00v6.00M54.25 3.50l5.20 3.00m0 -3.00l-5.20 3.00M63.54 2.00v6.00M60.94 3.50l5.20 3.00m0 -3.00l-5.20 3.00M70.22 2.00v6.00M67.63 3.50l5.20 3.00m0 -3.00l-5.20 3.00M76.91 2.00v6.00M74.31 3.50l5.20 3.00m0 -3.00l-5.20 3.00M83.60 2.00v6.00M81.00 3.50l5.20 3.00m0 -3.00l-5.20 3.00M90.29 2.00v6.00M87.69 3.50l5.20 3.00m0 -3.00l-5.20 3.00M96.98 2.00v6.00M94.38 3.50l5.20 3.00m0 -3.00l-5.20 3.00M103.66 2.00v6.00M101.07 3.50l5.20 3.00m0 -3.00l-5.20 3.00M110.35 2.00v6.00M107.75 3.50l5.20 3.00m0 -3.00l-5.20 3.00M117.04 2.00v6.00M114.44 3.50l5.20 3.00m0 -3.00l-5.20 3.00M123.73 2.00v6.00M121.13 3.50l5.20 3.00m0 -3.00l-5.20 3.00M130.42 2.00v6.00M127.82 3.50l5.20 3.00m0 -3.00l-5.20 3.00M137.10 2.00v6.00M134.51 3.50l5.20 3.00m0 -3.00l-5.20 3.00M143.79 2.00v6.00M141.19 3.50l5.20 3.00m0 -3.00l-5.20 3.00M150.48 2.00v6.00M147.88 3.50l5.20 3.00m0 -3.00l-5.20 3.00M157.17 2.00v6.00M154.57 3.50l5.20 3.00m0 -3.00l-5.20 3.00M163.86 2.00v6.00M161.26 3.50l5.20 3.00m0 -3.00l-5.20 3.00M170.54 2.00v6.00M167.95 3.50l5.20 3.00m0 -3.00l-5.20 3.00M177.23 2.00v6.00M174.63 3.50l5.20 3.00m0 -3.00l-5.20 3.00M183.92 2.00v6.00M181.32 3.50l5.20 3.00m0 -3.00l-5.20 3.00M190.61 2.00v6.00M188.01 3.50l5.20 3.00m0 -3.00l-5.20 3.00M197.30 2.00v6.00M194.70 3.50l5.20 3.00m0 -3.00l-5.20 3.00M203.98 2.00v6.00M201.39 3.50l5.20 3.00m0 -3.00l-5.20 3.00M210.67 2.00v6.00M208.07 3.50l5.20 3.00m0 -3.00l-5.20 3.00M217.36 2.00v6.00M214.76 3.50l5.20 3.00m0 -3.00l-5.20 3.00M224.05 2.00v6.00M221.45 3.50l5.20 3.00m0 -3.00l-5.20 3.00M230.74 2.00v6.00M228.14 3.50l5.20 3.00m0 -3.00l-5.20 3.00M237.42 2.00v6.00M234.83 3.50l5.20 3.00m0 -3.00l-5.20 3.00M244.11 2.00v6.00M241.51 3.50l5.20 3.00m0 -3.00l-5.20 3.00M250.80 2.00v6.00M248.20 3.50l5.20 3.00m0 -3.00l-5.20 3.00M257.49 2.00v6.00M254.89 3.50l5.20 3.00m0 -3.00l-5.20 3.00M264.18 2.00v6.00M261.58 3.50l5.20 3.00m0 -3.00l-5.20 3.00M270.86 2.00v6.00M268.27 3.50l5.20 3.00m0 -3.00l-5.20 3.00M277.55 2.00v6.00M274.95 3.50l5.20 3.00m0 -3.00l-5.20 3.00M284.24 2.00v6.00M281.64 3.50l5.20 3.00m0 -3.00l-5.20 3.00M290.93 2.00v6.00M288.33 3.50l5.20 3.00m0 -3.00l-5.20 3.00M297.62 2.00v6.00M295.02 3.50l5.20 3.00m0 -3.00l-5.20 3.00M304.30 2.00v6.00M301.71 3.50l5.20 3.00m0 -3.00l-5.20 3.00M310.99 2.00v6.00M308.39 3.50l5.20 3.00m0 -3.00l-5.20 3.00M317.68 2.00v6.00M315.08 3.50l5.20 3.00m0 -3.00l-5.20 3.00M324.37 2.00v6.00M321.77 3.50l5.20 3.00m0 -3.00l-5.20 3.00M331.06 2.00v6.00M328.46 3.50l5.20 3.00m0 -3.00l-5.20 3.00M337.74 2.00v6.00M335.15 3.50l5.20 3.00m0 -3.00l-5.20 3.00M344.43 2.00v6.00M341.83 3.50l5.20 3.00m0 -3.00l-5.20 3.00M351.12 2.00v6.00M348.52 3.50l5.20 3.00m0 -3.00l-5.20 3.00M357.81 2.00v6.00M355.21 3.50l5.20 3.00m0 -3.00l-5.20 3.00M364.50 2.00v6.00M361.90 3.50l5.20 3.00m0 -3.00l-5.20 3.00M371.18 2.00v6.00M368.59 3.50l5.20 3.00m0 -3.00l-5.20 3.00M377.87 2.00v6.00M375.27 3.50l5.20 3.00m0 -3.00l-5.20 3.00M384.56 2.00v6.00M381.96 3.50l5.20 3.00m0 -3.00l-5.20 3.00M391.25 2.00v6.00M388.65 3.50l5.20 3.00m0 -3.00l-5.20 3.00M397.94 2.00v6.00M395.34 3.50l5.20 3.00m0 -3.00l-5.20 3.00M404.62 2.00v6.00M402.03 3.50l5.20 3.00m0 -3.00l-5.20 3.00M411.31 2.00v6.00M408.71 3.50l5.20 3.00m0 -3.00l-5.20 3.00M418.00 2.00v6.00M415.40 3.50l5.20 3.00m0 -3.00l-5.20 3.00M424.69 2.00v6.00M422.09 3.50l5.20 3.00m0 -3.00l-5.20 3.00M431.38 2.00v6.00M428.78 3.50l5.20 3.00m0 -3.00l-5.20 3.00M438.06 2.00v6.00M435.47 3.50l5.20 3.00m0 -3.00l-5.20 3.00M444.75 2.00v6.00M442.15 3.50l5.20 3.00m0 -3.00l-5.20 3.00M451.44 2.00v6.00M448.84 3.50l5.20 3.00m0 -3.00l-5.20 3.00M458.13 2.00v6.00M455.53 3.50l5.20 3.00m0 -3.00l-5.20 3.00M464.82 2.00v6.00M462.22 3.50l5.20 3.00m0 -3.00l-5.20 3.00M471.50 2.00v6.00M468.91 3.50l5.20 3.00m0 -3.00l-5.20 3.00M478.19 2.00v6.00M475.59 3.50l5.20 3.00m0 -3.00l-5.20 3.00M484.88 2.00v6.00M482.28 3.50l5.20 3.00m0 -3.00l-5.20 3.00M491.57 2.00v6.00M488.97 3.50l5.20 3.00m0 -3.00l-5.20 3.00M498.26 2.00v6.00M495.66 3.50l5.20 3.00m0 -3.00l-5.20 3.00M504.94 2.00v6.00M502.35 3.50l5.20 3.00m0 -3.00l-5.20 3.00M511.63 2.00v6.00M509.03 3.50l5.20 3.00m0 -3.00l-5.20 3.00M518.32 2.00v6.00M515.72 3.50l5.20 3.00m0 -3.00l-5.20 3.00M525.01 2.00v6.00M522.41 3.50l5.20 3.00m0 -3.00l-5.20 3.00M531.70 2.00v6.00M529.10 3.50l5.20 3.00m0 -3.00l-5.20 3.00M538.38 2.00v6.00M535.79 3.50l5.20 3.00m0 -3.00l-5.20 3.00M545.07 2.00v6.00M542.47 3.50l5.20 3.00m0 -3.00l-5.20 3.00M551.76 2.00v6.00M549.16 3.50l5.20 3.00m0 -3.00l-5.20 3.00M558.45 2.00v6.00M555.85 3.50l5.20 3.00m0 -3.00l-5.20 3.00M565.14 2.00v6.00M562.54 3.50l5.20 3.00m0 -3.00l-5.20 3.00M571.82 2.00v6.00M569.23 3.50l5.20 3.00m0 -3.00l-5.20 3.00M578.51 2.00v6.00M575.91 3.50l5.20 3.00m0 -3.00l-5.20 3.00"/></svg>
<svg class="st" style="left:379.60px;top:493.51px" width="568.48" height="10"><path d="M3.34 2.00v6.00M0.75 3.50l5.20 3.00m0 -3.00l-5.20 3.00M10.03 2.00v6.00M7.43 3.50l5.20 3.00m0 -3.00l-5.20 3.00M16.72 2.00v6.00M14.12 3.50l5.20 3.00m0 -3.00l-5.20 3.00M23.41 2.00v6.00M20.81 3.50l5.20 3.00m0 -3.00l-5.20 3.00M30.10 2.00v6.00M27.50 3.50l5.20 3.00m0 -3.00l-5.20 3.00M36.78 2.00v6.00M34.19 3.50l5.20 3.00m0 -3.00l-5.20 3.00M43.47 2.00v6.00M40.87 3.50l5.20 3.00m0 -3.00l-5.20 3.00M50.16 2.00v6.00M47.56 3.50l5.20 3.00m0 -3.00l-5.20 3.00M56.85 2.00v6.00M54.25 3.50l5.20 3.00m0 -3.00l-5.20 3.00M63.54 2.00v6.00M60.94 3.50l5.20 3.00m0 -3.00l-5.20 3.00M70.22 2.00v6.00M67.63 3.50l5.20 3.00m0 -3.00l-5.20 3.00M76.91 2.00v6.00M74.31 3.50l5.20 3.00m0 -3.00l-5.20 3.00M83.60 2.00v6.00M81.00 3.50l5.20 3.00m0 -3.00l-5.20 3.00M90.29 2.00v6.00M87.69 3.50l5.20 3.00m0 -3.00l-5.20 3.00M96.98 2.00v6.00M94.38 3.50l5.20 3.00m0 -3.00l-5.20 3.00M103.66 2.00v6.00M101.07 3.50l5.20 3.00m0 -3.00l-5.20 3.00M110.35 2.00v6.00M107.75 3.50l5.20 3.00m0 -3.00l-5.20 3.00M117.04 2.00v6.00M114.44 3.50l5.20 3.00m0 -3.00l-5.20 3.00M123.73 2.00v6.00M121.13 3.50l5.20 3.00m0 -3.00l-5.20 3.00M130.42 2.00v6.00M127.82 3.50l5.20 3.00m0 -3.00l-5.20 3.00M137.10 2.00v6.00M134.51 3.50l5.20 3.00m0 -3.00l-5.20 3.00M143.79 2.00v6.00M141.19 3.50l5.20 3.00m0 -3.00l-5.20 3.00M150.48 2.00v6.00M147.88 3.50l5.20 3.00m0 -3.00l-5.20 3.00M157.17 2.00v6.00M154.57 3.50l5.20 3.00m0 -3.00l-5.20 3.00M163.86 2.00v6.00M161.26 3.50l5.20 3.00m0 -3.00l-5.20 3.00M170.54 2.00v6.00M167.95 3.50l5.20 3.00m0 -3.00l-5.20 3.00M177.23 2.00v6.00M174.63 3.50l5.20 3.00m0 -3.00l-5.20 3.00M183.92 2.00v6.00M181.32 3.50l5.20 3.00m0 -3.00l-5.20 3.00M190.61 2.00v6.00M188.01 3.50l5.20 3.00m0 -3.00l-5.20 3.00M197.30 2.00v6.00M194.70 3.50l5.20 3.00m0 -3.00l-5.20 3.00M203.98 2.00v6.00M201.39 3.50l5.20 3.00m0 -3.00l-5.20 3.00M210.67 2.00v6.00M208.07 3.50l5.20 3.00m0 -3.00l-5.20 3.00M217.36 2.00v6.00M214.76 3.50l5.20 3.00m0 -3.00l-5.20 3.00M224.05 2.00v6.00M221.45 3.50l5.20 3.00m0 -3.00l-5.20 3.00M230.74 2.00v6.00M228.14 3.50l5.20 3.00m0 -3.00l-5.20 3.00M237.42 2.00v6.00M234.83 3.50l5.20 3.00m0 -3.00l-5.20 3.00M244.11 2.00v6.00M241.51 3.50l5.20 3.00m0 -3.00l-5.20 3.00M250.80 2.00v6.00M248.20 3.50l5.20 3.00m0 -3.00l-5.20 3.00M257.49 2.00v6.00M254.89 3.50l5.20 3.00m0 -3.00l-5.20 3.00M264.18 2.00v6.00M261.58 3.50l5.20 3.00m0 -3.00l-5.20 3.00M270.86 2.00v6.00M268.27 3.50l5.20 3.00m0 -3.00l-5.20 3.00M277.55 2.00v6.00M274.95 3.50l5.20 3.00m0 -3.00l-5.20 3.00M284.24 2.00v6.00M281.64 3.50l5.20 3.00m0 -3.00l-5.20 3.00M290.93 2.00v6.00M288.33 3.50l5.20 3.00m0 -3.00l-5.20 3.00M297.62 2.00v6.00M295.02 3.50l5.20 3.00m0 -3.00l-5.20 3.00M304.30 2.00v6.00M301.71 3.50l5.20 3.00m0 -3.00l-5.20 3.00M310.99 2.00v6.00M308.39 3.50l5.20 3.00m0 -3.00l-5.20 3.00M317.68 2.00v6.00M315.08 3.50l5.20 3.00m0 -3.00l-5.20 3.00M324.37 2.00v6.00M321.77 3.50l5.20 3.00m0 -3.00l-5.20 3.00M331.06 2.00v6.00M328.46 3.50l5.20 3.00m0 -3.00l-5.20 3.00M337.74 2.00v6.00M335.15 3.50l5.20 3.00m0 -3.00l-5.20 3.00M344.43 2.00v6.00M341.83 3.50l5.20 3.00m0 -3.00l-5.20 3.00M351.12 2.00v6.00M348.52 3.50l5.20 3.00m0 -3.00l-5.20 3.00M357.81 2.00v6.00M355.21 3.50l5.20 3.00m0 -3.00l-5.20 3.00M364.50 2.00v6.00M361.90 3.50l5.20 3.00m0 -3.00l-5.20 3.00M371.18 2.00v6.00M368.59 3.50l5.20 3.00m0 -3.00l-5.20 3.00M377.87 2.00v6.00M375.27 3.50l5.20 3.00m0 -3.00l-5.20 3.00M384.56 2.00v6.00M381.96 3.50l5.20 3.00m0 -3.00l-5.20 3.00M391.25 2.00v6.00M388.65 3.50l5.20 3.00m0 -3.00l-5.20 3.00M397.94 2.00v6.00M395.34 3.50l5.20 3.00m0 -3.00l-5.20 3.00M404.62 2.00v6.00M402.03 3.50l5.20 3.00m0 -3.00l-5.20 3.00M411.31 2.00v6.00M408.71 3.50l5.20 3.00m0 -3.00l-5.20 3.00M418.00 2.00v6.00M415.40 3.50l5.20 3.00m0 -3.00l-5.20 3.00M424.69 2.00v6.00M422.09 3.50l5.20 3.00m0 -3.00l-5.20 3.00M431.38 2.00v6.00M428.78 3.50l5.20 3.00m0 -3.00l-5.20 3.00M438.06 2.00v6.00M435.47 3.50l5.20 3.00m0 -3.00l-5.20 3.00M444.75 2.00v6.00M442.15 3.50l5.20 3.00m0 -3.00l-5.20 3.00M451.44 2.00v6.00M448.84 3.50l5.20 3.00m0 -3.00l-5.20 3.00M458.13 2.00v6.00M455.53 3.50l5.20 3.00m0 -3.00l-5.20 3.00M464.82 2.00v6.00M462.22 3.50l5.20 3.00m0 -3.00l-5.20 3.00M471.50 2.00v6.00M468.91 3.50l5.20 3.00m0 -3.00l-5.20 3.00M478.19 2.00v6.00M475.59 3.50l5.20 3.00m0 -3.00l-5.20 3.00M484.88 2.00v6.00M482.28 3.50l5.20 3.00m0 -3.00l-5.20 3.00M491.57 2.00v6.00M488.97 3.50l5.20 3.00m0 -3.00l-5.20 3.00M498.26 2.00v6.00M495.66 3.50l5.20 3.00m0 -3.00l-5.20 3.00M504.94 2.00v6.00M502.35 3.50l5.20 3.00m0 -3.00l-5.20 3.00M511.63 2.00v6.00M509.03 3.50l5.20 3.00m0 -3.00l-5.20 3.00M518.32 2.00v6.00M515.72 3.50l5.20 3.00m0 -3.00l-5.20 3.00M525.01 2.00v6.00M522.41 3.50l5.20 3.00m0 -3.00l-5.20 3.00M531.70 2.00v6.00M529.10 3.50l5.20 3.00m0 -3.00l-5.20 3.00M538.38 2.00v6.00M535.79 3.50l5.20 3.00m0 -3.00l-5.20 3.00M545.07 2.00v6.00M542.47 3.50l5.20 3.00m0 -3.00l-5.20 3.00M551.76 2.00v6.00M549.16 3.50l5.20 3.00m0 -3.00l-5.20 3.00M558.45 2.00v6.00M555.85 3.50l5.20 3.00m0 -3.00l-5.20 3.00M565.14 2.00v6.00M562.54 3.50l5.20 3.00m0 -3.00l-5.20 3.00"/></svg>
<svg class="st" style="left:306.03px;top:533.62px" width="642.05" height="10"><path d="M3.34 2.00v6.00M0.75 3.50l5.20 3.00m0 -3.00l-5.20 3.00M10.03 2.00v6.00M7.43 3.50l5.20 3.00m0 -3.00l-5.20 3.00M16.72 2.00v6.00M14.12 3.50l5.20 3.00m0 -3.00l-5.20 3.00M23.41 2.00v6.00M20.81 3.50l5.20 3.00m0 -3.00l-5.20 3.00M30.10 2.00v6.00M27.50 3.50l5.20 3.00m0 -3.00l-5.20 3.00M36.78 2.00v6.00M34.19 3.50l5.20 3.00m0 -3.00l-5.20 3.00M43.47 2.00v6.00M40.87 3.50l5.20 3.00m0 -3.00l-5.20 3.00M50.16 2.00v6.00M47.56 3.50l5.20 3.00m0 -3.00l-5.20 3.00M56.85 2.00v6.00M54.25 3.50l5.20 3.00m0 -3.00l-5.20 3.00M63.54 2.00v6.00M60.94 3.50l5.20 3.00m0 -3.00l-5.20 3.00M70.22 2.00v6.00M67.63 3.50l5.20 3.00m0 -3.00l-5.20 3.00M76.91 2.00v6.00M74.31 3.50l5.20 3.00m0 -3.00l-5.20 3.00M83.60 2.00v6.00M81.00 3.50l5.20 3.00m0 -3.00l-5.20 3.00M90.29 2.00v6.00M87.69 3.50l5.20 3.00m0 -3.00l-5.20 3.00M96.98 2.00v6.00M94.38 3.50l5.20 3.00m0 -3.00l-5.20 3.00M103.66 2.00v6.00M101.07 3.50l5.20 3.00m0 -3.00l-5.20 3.00M110.35 2.00v6.00M107.75 3.50l5.20 3.00m0 -3.00l-5.20 3.00M117.04 2.00v6.00M114.44 3.50l5.20 3.00m0 -3.00l-5.20 3.00M123.73 2.00v6.00M121.13 3.50l5.20 3.00m0 -3.00l-5.20 3.00M130.42 2.00v6.00M127.82 3.50l5.20 3.00m0 -3.00l-5.20 3.00M137.10 2.00v6.00M134.51 3.50l5.20 3.00m0 -3.00l-5.20 3.00M143.79 2.00v6.00M141.19 3.50l5.20 3.00m0 -3.00l-5.20 3.00M150.48 2.00v6.00M147.88 3.50l5.20 3.00m0 -3.00l-5.20 3.00M157.17 2.00v6.00M154.57 3.50l5.20 3.00m0 -3.00l-5.20 3.00M163.86 2.00v6.00M161.26 3.50l5.20 3.00m0 -3.00l-5.20 3.00M170.54 2.00v6.00M167.95 3.50l5.20 3.00m0 -3.00l-5.20 3.00M177.23 2.00v6.00M174.63 3.50l5.20 3.00m0 -3.00l-5.20 3.00M183.92 2.00v6.00M181.32 3.50l5.20 3.00m0 -3.00l-5.20 3.00M190.61 2.00v6.00M188.01 3.50l5.20 3.00m0 -3.00l-5.20 3.00M197.30 2.00v6.00M194.70 3.50l5.20 3.00m0 -3.00l-5.20 3.00M203.98 2.00v6.00M201.39 3.50l5.20 3.00m0 -3.00l-5.20 3.00M210.67 2.00v6.00M208.07 3.50l5.20 3.00m0 -3.00l-5.20 3.00M217.36 2.00v6.00M214.76 3.50l5.20 3.00m0 -3.00l-5.20 3.00M224.05 2.00v6.00M221.45 3.50l5.20 3.00m0 -3.00l-5.20 3.00M230.74 2.00v6.00M228.14 3.50l5.20 3.00m0 -3.00l-5.20 3.00M237.42 2.00v6.00M234.83 3.50l5.20 3.00m0 -3.00l-5.20 3.00M244.11 2.00v6.00M241.51 3.50l5.20 3.00m0 -3.00l-5.20 3.00M250.80 2.00v6.00M248.20 3.50l5.20 3.00m0 -3.00l-5.20 3.00M257.49 2.00v6.00M254.89 3.50l5.20 3.00m0 -3.00l-5.20 3.00M264.18 2.00v6.00M261.58 3.50l5.20 3.00m0 -3.00l-5.20 3.00M270.86 2.00v6.00M268.27 3.50l5.20 3.00m0 -3.00l-5.20 3.00M277.55 2.00v6.00M274.95 3.50l5.20 3.00m0 -3.00l-5.20 3.00M284.24 2.00v6.00M281.64 3.50l5.20 3.00m0 -3.00l-5.20 3.00M290.93 2.00v6.00M288.33 3.50l5.20 3.00m0 -3.00l-5.20 3.00M297.62 2.00v6.00M295.02 3.50l5.20 3.00m0 -3.00l-5.20 3.00M304.30 2.00v6.00M301.71 3.50l5.20 3.00m0 -3.00l-5.20 3.00M310.99 2.00v6.00M308.39 3.50l5.20 3.00m0 -3.00l-5.20 3.00M317.68 2.00v6.00M315.08 3.50l5.20 3.00m0 -3.00l-5.20 3.00M324.37 2.00v6.00M321.77 3.50l5.20 3.00m0 -3.00l-5.20 3.00M331.06 2.00v6.00M328.46 3.50l5.20 3.00m0 -3.00l-5.20 3.00M337.74 2.00v6.00M335.15 3.50l5.20 3.00m0 -3.00l-5.20 3.00M344.43 2.00v6.00M341.83 3.50l5.20 3.00m0 -3.00l-5.20 3.00M351.12 2.00v6.00M348.52 3.50l5.20 3.00m0 -3.00l-5.20 3.00M357.81 2.00v6.00M355.21 3.50l5.20 3.00m0 -3.00l-5.20 3.00M364.50 2.00v6.00M361.90 3.50l5.20 3.00m0 -3.00l-5.20 3.00M371.18 2.00v6.00M368.59 3.50l5.20 3.00m0 -3.00l-5.20 3.00M377.87 2.00v6.00M375.27 3.50l5.20 3.00m0 -3.00l-5.20 3.00M384.56 2.00v6.00M381.96 3.50l5.20 3.00m0 -3.00l-5.20 3.00M391.25 2.00v6.00M388.65 3.50l5.20 3.00m0 -3.00l-5.20 3.00M397.94 2.00v6.00M395.34 3.50l5.20 3.00m0 -3.00l-5.20 3.00M404.62 2.00v6.00M402.03 3.50l5.20 3.00m0 -3.00l-5.20 3.00M411.31 2.00v6.00M408.71 3.50l5.20 3.00m0 -3.00l-5.20 3.00M418.00 2.00v6.00M415.40 3.50l5.20 3.00m0 -3.00l-5.20 3.00M424.69 2.00v6.00M422.09 3.50l5.20 3.00m0 -3.00l-5.20 3.00M431.38 2.00v6.00M428.78 3.50l5.20 3.00m0 -3.00l-5.20 3.00M438.06 2.00v6.00M435.47 3.50l5.20 3.00m0 -3.00l-5.20 3.00M444.75 2.00v6.00M442.15 3.50l5.20 3.00m0 -3.00l-5.20 3.00M451.44 2.00v6.00M448.84 3.50l5.20 3.00m0 -3.00l-5.20 3.00M458.13 2.00v6.00M455.53 3.50l5.20 3.00m0 -3.00l-5.20 3.00M464.82 2.00v6.00M462.22 3.50l5.20 3.00m0 -3.00l-5.20 3.00M471.50 2.00v6.00M468.91 3.50l5.20 3.00m0 -3.00l-5.20 3.00M478.19 2.00v6.00M475.59 3.50l5.20 3.00m0 -3.00l-5.20 3.00M484.88 2.00v6.00M482.28 3.50l5.20 3.00m0 -3.00l-5.20 3.00M491.57 2.00v6.00M488.97 3.50l5.20 3.00m0 -3.00l-5.20 3.00M498.26 2.00v6.00M495.66 3.50l5.20 3.00m0 -3.00l-5.20 3.00M504.94 2.00v6.00M502.35 3.50l5.20 3.00m0 -3.00l-5.20 3.00M511.63 2.00v6.00M509.03 3.50l5.20 3.00m0 -3.00l-5.20 3.00M518.32 2.00v6.00M515.72 3.50l5.20 3.00m0 -3.00l-5.20 3.00M525.01 2.00v6.00M522.41 3.50l5.20 3.00m0 -3.00l-5.20 3.00M531.70 2.00v6.00M529.10 3.50l5.20 3.00m0 -3.00l-5.20 3.00M538.38 2.00v6.00M535.79 3.50l5.20 3.00m0 -3.00l-5.20 3.00M545.07 2.00v6.00M542.47 3.50l5.20 3.00m0 -3.00l-5.20 3.00M551.76 2.00v6.00M549.16 3.50l5.20 3.00m0 -3.00l-5.20 3.00M558.45 2.00v6.00M555.85 3.50l5.20 3.00m0 -3.00l-5.20 3.00M565.14 2.00v6.00M562.54 3.50l5.20 3.00m0 -3.00l-5.20 3.00M571.82 2.00v6.00M569.23 3.50l5.20 3.00m0 -3.00l-5.20 3.00M578.51 2.00v6.00M575.91 3.50l5.20 3.00m0 -3.00l-5.20 3.00M585.20 2.00v6.00M582.60 3.50l5.20 3.00m0 -3.00l-5.20 3.00M591.89 2.00v6.00M589.29 3.50l5.20 3.00m0 -3.00l-5.20 3.00M598.58 2.00v6.00M595.98 3.50l5.20 3.00m0 -3.00l-5.20 3.00M605.26 2.00v6.00M602.67 3.50l5.20 3.00m0 -3.00l-5.20 3.00M611.95 2.00v6.00M609.35 3.50l5.20 3.00m0 -3.00l-5.20 3.00M618.64 2.00v6.00M616.04 3.50l5.20 3.00m0 -3.00l-5.20 3.00M625.33 2.00v6.00M622.73 3.50l5.20 3.00m0 -3.00l-5.20 3.00M632.02 2.00v6.00M629.42 3.50l5.20 3.00m0 -3.00l-5.20 3.00M638.70 2.00v6.00M636.11 3.50l5.20 3.00m0 -3.00l-5.20 3.00"/></svg>
<svg class="st" style="left:118.77px;top:587.10px" width="829.31" height="10"><path d="M3.34 2.00v6.00M0.75 3.50l5.20 3.00m0 -3.00l-5.20 3.00M10.03 2.00v6.00M7.43 3.50l5.20 3.00m0 -3.00l-5.20 3.00M16.72 2.00v6.00M14.12 3.50l5.20 3.00m0 -3.00l-5.20 3.00M23.41 2.00v6.00M20.81 3.50l5.20 3.00m0 -3.00l-5.20 3.00M30.10 2.00v6.00M27.50 3.50l5.20 3.00m0 -3.00l-5.20 3.00M36.78 2.00v6.00M34.19 3.50l5.20 3.00m0 -3.00l-5.20 3.00M43.47 2.00v6.00M40.87 3.50l5.20 3.00m0 -3.00l-5.20 3.00M50.16 2.00v6.00M47.56 3.50l5.20 3.00m0 -3.00l-5.20 3.00M56.85 2.00v6.00M54.25 3.50l5.20 3.00m0 -3.00l-5.20 3.00M63.54 2.00v6.00M60.94 3.50l5.20 3.00m0 -3.00l-5.20 3.00M70.22 2.00v6.00M67.63 3.50l5.20 3.00m0 -3.00l-5.20 3.00M76.91 2.00v6.00M74.31 3.50l5.20 3.00m0 -3.00l-5.20 3.00M83.60 2.00v6.00M81.00 3.50l5.20 3.00m0 -3.00l-5.20 3.00M90.29 2.00v6.00M87.69 3.50l5.20 3.00m0 -3.00l-5.20 3.00M96.98 2.00v6.00M94.38 3.50l5.20 3.00m0 -3.00l-5.20 3.00M103.66 2.00v6.00M101.07 3.50l5.20 3.00m0 -3.00l-5.20 3.00M110.35 2.00v6.00M107.75 3.50l5.20 3.00m0 -3.00l-5.20 3.00M117.04 2.00v6.00M114.44 3.50l5.20 3.00m0 -3.00l-5.20 3.00M123.73 2.00v6.00M121.13 3.50l5.20 3.00m0 -3.00l-5.20 3.00M130.42 2.00v6.00M127.82 3.50l5.20 3.00m0 -3.00l-5.20 3.00M137.10 2.00v6.00M134.51 3.50l5.20 3.00m0 -3.00l-5.20 3.00M143.79 2.00v6.00M141.19 3.50l5.20 3.00m0 -3.00l-5.20 3.00M150.48 2.00v6.00M147.88 3.50l5.20 3.00m0 -3.00l-5.20 3.00M157.17 2.00v6.00M154.57 3.50l5.20 3.00m0 -3.00l-5.20 3.00M163.86 2.00v6.00M161.26 3.50l5.20 3.00m0 -3.00l-5.20 3.00M170.54 2.00v6.00M167.95 3.50l5.20 3.00m0 -3.00l-5.20 3.00M177.23 2.00v6.00M174.63 3.50l5.20 3.00m0 -3.00l-5.20 3.00M183.92 2.00v6.00M181.32 3.50l5.20 3.00m0 -3.00l-5.20 3.00M190.61 2.00v6.00M188.01 3.50l5.20 3.00m0 -3.00l-5.20 3.00M197.30 2.00v6.00M194.70 3.50l5.20 3.00m0 -3.00l-5.20 3.00M203.98 2.00v6.00M201.39 3.50l5.20 3.00m0 -3.00l-5.20 3.00M210.67 2.00v6.00M208.07 3.50l5.20 3.00m0 -3.00l-5.20 3.00M217.36 2.00v6.00M214.76 3.50l5.20 3.00m0 -3.00l-5.20 3.00M224.05 2.00v6.00M221.45 3.50l5.20 3.00m0 -3.00l-5.20 3.00M230.74 2.00v6.00M228.14 3.50l5.20 3.00m0 -3.00l-5.20 3.00M237.42 2.00v6.00M234.83 3.50l5.20 3.00m0 -3.00l-5.20 3.00M244.11 2.00v6.00M241.51 3.50l5.20 3.00m0 -3.00l-5.20 3.00M250.80 2.00v6.00M248.20 3.50l5.20 3.00m0 -3.00l-5.20 3.00M257.49 2.00v6.00M254.89 3.50l5.20 3.00m0 -3.00l-5.20 3.00M264.18 2.00v6.00M261.58 3.50l5.20 3.00m0 -3.00l-5.20 3.00M270.86 2.00v6.00M268.27 3.50l5.20 3.00m0 -3.00l-5.20 3.00M277.55 2.00v6.00M274.95 3.50l5.20 3.00m0 -3.00l-5.20 3.00M284.24 2.00v6.00M281.64 3.50l5.20 3.00m0 -3.00l-5.20 3.00M290.93 2.00v6.00M288.33 3.50l5.20 3.00m0 -3.00l-5.20 3.00M297.62 2.00v6.00M295.02 3.50l5.20 3.00m0 -3.00l-5.20 3.00M304.30 2.00v6.00M301.71 3.50l5.20 3.00m0 -3.00l-5.20 3.00M310.99 2.00v6.00M308.39 3.50l5.20 3.00m0 -3.00l-5.20 3.00M317.68 2.00v6.00M315.08 3.50l5.20 3.00m0 -3.00l-5.20 3.00M324.37 2.00v6.00M321.77 3.50l5.20 3.00m0 -3.00l-5.20 3.00M331.06 2.00v6.00M328.46 3.50l5.20 3.00m0 -3.00l-5.20 3.00M337.74 2.00v6.00M335.15 3.50l5.20 3.00m0 -3.00l-5.20 3.00M344.43 2.00v6.00M341.83 3.50l5.20 3.00m0 -3.00l-5.20 3.00M351.12 2.00v6.00M348.52 3.50l5.20 3.00m0 -3.00l-5.20 3.00M357.81 2.00v6.00M355.21 3.50l5.20 3.00m0 -3.00l-5.20 3.00M364.50 2.00v6.00M361.90 3.50l5.20 3.00m0 -3.00l-5.20 3.00M371.18 2.00v6.00M368.59 3.50l5.20 3.00m0 -3.00l-5.20 3.00M377.87 2.00v6.00M375.27 3.50l5.20 3.00m0 -3.00l-5.20 3.00M384.56 2.00v6.00M381.96 3.50l5.20 3.00m0 -3.00l-5.20 3.00M391.25 2.00v6.00M388.65 3.50l5.20 3.00m0 -3.00l-5.20 3.00M397.94 2.00v6.00M395.34 3.50l5.20 3.00m0 -3.00l-5.20 3.00M404.62 2.00v6.00M402.03 3.50l5.20 3.00m0 -3.00l-5.20 3.00M411.31 2.00v6.00M408.71 3.50l5.20 3.00m0 -3.00l-5.20 3.00M418.00 2.00v6.00M415.40 3.50l5.20 3.00m0 -3.00l-5.20 3.00M424.69 2.00v6.00M422.09 3.50l5.20 3.00m0 -3.00l-5.20 3.00M431.38 2.00v6.00M428.78 3.50l5.20 3.00m0 -3.00l-5.20 3.00M438.06 2.00v6.00M435.47 3.50l5.20 3.00m0 -3.00l-5.20 3.00M444.75 2.00v6.00M442.15 3.50l5.20 3.00m0 -3.00l-5.20 3.00M451.44 2.00v6.00M448.84 3.50l5.20 3.00m0 -3.00l-5.20 3.00M458.13 2.00v6.00M455.53 3.50l5.20 3.00m0 -3.00l-5.20 3.00M464.82 2.00v6.00M462.22 3.50l5.20 3.00m0 -3.00l-5.20 3.00M471.50 2.00v6.00M468.91 3.50l5.20 3.00m0 -3.00l-5.20 3.00M478.19 2.00v6.00M475.59 3.50l5.20 3.00m0 -3.00l-5.20 3.00M484.88 2.00v6.00M482.28 3.50l5.20 3.00m0 -3.00l-5.20 3.00M491.57 2.00v6.00M488.97 3.50l5.20 3.00m0 -3.00l-5.20 3.00M498.26 2.00v6.00M495.66 3.50l5.20 3.00m0 -3.00l-5.20 3.00M504.94 2.00v6.00M502.35 3.50l5.20 3.00m0 -3.00l-5.20 3.00M511.63 2.00v6.00M509.03 3.50l5.20 3.00m0 -3.00l-5.20 3.00M518.32 2.00v6.00M515.72 3.50l5.20 3.00m0 -3.00l-5.20 3.00M525.01 2.00v6.00M522.41 3.50l5.20 3.00m0 -3.00l-5.20 3.00M531.70 2.00v6.00M529.10 3.50l5.20 3.00m0 -3.00l-5.20 3.00M538.38 2.00v6.00M535.79 3.50l5.20 3.00m0 -3.00l-5.20 3.00M545.07 2.00v6.00M542.47 3.50l5.20 3.00m0 -3.00l-5.20 3.00M551.76 2.00v6.00M549.16 3.50l5.20 3.00m0 -3.00l-5.20 3.00M558.45 2.00v6.00M555.85 3.50l5.20 3.00m0 -3.00l-5.20 3.00M565.14 2.00v6.00M562.54 3.50l5.20 3.00m0 -3.00l-5.20 3.00M571.82 2.00v6.00M569.23 3.50l5.20 3.00m0 -3.00l-5.20 3.00M578.51 2.00v6.00M575.91 3.50l5.20 3.00m0 -3.00l-5.20 3.00M585.20 2.00v6.00M582.60 3.50l5.20 3.00m0 -3.00l-5.20 3.00M591.89 2.00v6.00M589.29 3.50l5.20 3.00m0 -3.00l-5.20 3.00M598.58 2.00v6.00M595.98 3.50l5.20 3.00m0 -3.00l-5.20 3.00M605.26 2.00v6.00M602.67 3.50l5.20 3.00m0 -3.00l-5.20 3.00M611.95 2.00v6.00M609.35 3.50l5.20 3.00m0 -3.00l-5.20 3.00M618.64 2.00v6.00M616.04 3.50l5.20 3.00m0 -3.00l-5.20 3.00M625.33 2.00v6.00M622.73 3.50l5.20 3.00m0 -3.00l-5.20 3.00M632.02 2.00v6.00M629.42 3.50l5.20 3.00m0 -3.00l-5.20 3.00M638.70 2.00v6.00M636.11 3.50l5.20 3.00m0 -3.00l-5.20 3.00M645.39 2.00v6.00M642.79 3.50l5.20 3.00m0 -3.00l-5.20 3.00M652.08 2.00v6.00M649.48 3.50l5.20 3.00m0 -3.00l-5.20 3.00M658.77 2.00v6.00M656.17 3.50l5.20 3.00m0 -3.00l-5.20 3.00M665.46 2.00v6.00M662.86 3.50l5.20 3.00m0 -3.00l-5.20 3.00M672.14 2.00v6.00M669.55 3.50l5.20 3.00m0 -3.00l-5.20 3.00M678.83 2.00v6.00M676.23 3.50l5.20 3.00m0 -3.00l-5.20 3.00M685.52 2.00v6.00M682.92 3.50l5.20 3.00m0 -3.00l-5.20 3.00M692.21 2.00v6.00M689.61 3.50l5.20 3.00m0 -3.00l-5.20 3.00M698.90 2.00v6.00M696.30 3.50l5.20 3.00m0 -3.00l-5.20 3.00M705.58 2.00v6.00M702.99 3.50l5.20 3.00m0 -3.00l-5.20 3.00M712.27 2.00v6.00M709.67 3.50l5.20 3.00m0 -3.00l-5.20 3.00M718.96 2.00v6.00M716.36 3.50l5.20 3.00m0 -3.00l-5.20 3.00M725.65 2.00v6.00M723.05 3.50l5.20 3.00m0 -3.00l-5.20 3.00M732.34 2.00v6.00M729.74 3.50l5.20 3.00m0 -3.00l-5.20 3.00M739.02 2.00v6.00M736.43 3.50l5.20 3.00m0 -3.00l-5.20 3.00M745.71 2.00v6.00M743.11 3.50l5.20 3.00m0 -3.00l-5.20 3.00M752.40 2.00v6.00M749.80 3.50l5.20 3.00m0 -3.00l-5.20 3.00M759.09 2.00v6.00M756.49 3.50l5.20 3.00m0 -3.00l-5.20 3.00M765.78 2.00v6.00M763.18 3.50l5.20 3.00m0 -3.00l-5.20 3.00M772.46 2.00v6.00M769.87 3.50l5.20 3.00m0 -3.00l-5.20 3.00M779.15 2.00v6.00M776.55 3.50l5.20 3.00m0 -3.00l-5.20 3.00M785.84 2.00v6.00M783.24 3.50l5.20 3.00m0 -3.00l-5.20 3.00M792.53 2.00v6.00M789.93 3.50l5.20 3.00m0 -3.00l-5.20 3.00M799.22 2.00v6.00M796.62 3.50l5.20 3.00m0 -3.00l-5.20 3.00M805.90 2.00v6.00M803.31 3.50l5.20 3.00m0 -3.00l-5.20 3.00M812.59 2.00v6.00M809.99 3.50l5.20 3.00m0 -3.00l-5.20 3.00M819.28 2.00v6.00M816.68 3.50l5.20 3.00m0 -3.00l-5.20 3.00M825.97 2.00v6.00M823.37 3.50l5.20 3.00m0 -3.00l-5.20 3.00"/></svg>
<svg class="st" style="left:131.49px;top:680.69px" width="8" height="10"><path style="stroke:#e6e6e6" d="M4.00 2.00v6.00M1.40 3.50l5.20 3.00m0 -3.00l-5.20 3.00"/></svg>
<svg class="st" style="left:927.36px;top:359.81px" width="8" height="10"><path style="stroke:#bcb84c" d="M4.00 2.00v6.00M1.40 3.50l5.20 3.00m0 -3.00l-5.20 3.00"/></svg></div>
<div class="sbt" style="top:680.29px">0:ssh  1:bash  2:ssh- 3:bash<span class="rt">squanchy.ipng.ch</span></div>
</body></html>
